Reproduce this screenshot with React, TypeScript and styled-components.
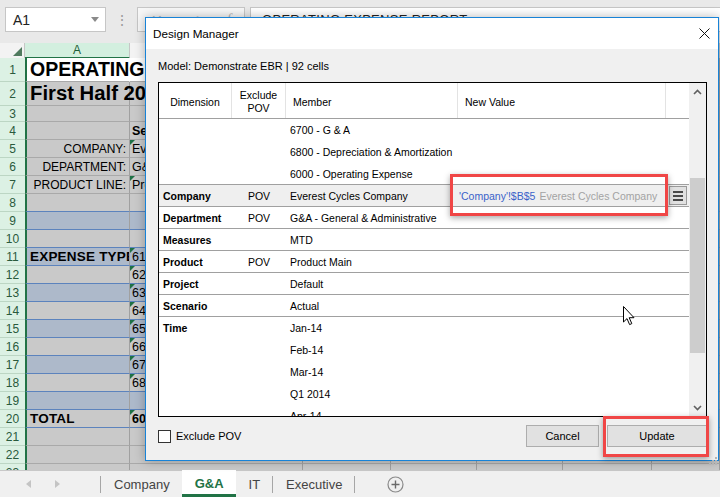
import React from 'react';
import styled, { createGlobalStyle } from 'styled-components';

const FONT = '"Liberation Sans", Arial, sans-serif';
const SHEET_COLS = '25px 105px 173px 88px 86px 86px 89px 1fr';
const GRID_COLS = '73px 54px 172px 208px 1fr';

const GlobalStyle = createGlobalStyle`
  html, body { margin: 0; padding: 0; }
  body { font-family: ${FONT}; background: #fff; }
  *, *::before, *::after { box-sizing: border-box; }
`;

/* ---------- Excel frame ---------- */

const Screen = styled.div`
  position: relative;
  width: 720px;
  height: 497px;
  overflow: hidden;
  display: flex;
  flex-direction: column;
  background: #e9e9e9;
  font-family: ${FONT};
`;

const FormulaBar = styled.div`
  height: 43px;
  flex: none;
  display: flex;
  align-items: flex-start;
  padding: 7px 0 0 5px;
  background: #e9e9e9;
`;

const NameBox = styled.div`
  width: 101px;
  height: 25px;
  background: #fff;
  border: 1px solid #c6c6c6;
  display: flex;
  align-items: center;
  justify-content: space-between;
  padding: 0 6px 0 7px;
  font-size: 14px;
  color: #222;
`;

const Grip = styled.div`
  width: 31px;
  height: 25px;
  display: flex;
  align-items: center;
  justify-content: center;
  color: #9a9a9a;
  font-size: 14px;
`;

const FxGroup = styled.div`
  width: 108px;
  height: 25px;
  border: 1px solid #c6c6c6;
  background: #f7f7f7;
  display: flex;
  align-items: center;
  justify-content: space-around;
  color: #b4b4b4;
  font-size: 14px;
`;

const FxText = styled.span`
  font-style: italic;
  font-family: "Liberation Serif", serif;
  font-size: 15px;
`;

const FormulaInput = styled.div`
  flex: 1;
  margin-left: 5px;
  height: 25px;
  background: #fff;
  border: 1px solid #c6c6c6;
  border-right: none;
  display: flex;
  align-items: center;
  padding-left: 11px;
  font-size: 13px;
  color: #222;
  letter-spacing: 0.3px;
`;

const ColHeaderRow = styled.div`
  display: grid;
  grid-template-columns: ${SHEET_COLS};
  height: 15px;
  flex: none;
  background: #f3f3f3;
`;

const Corner = styled.div`
  display: flex;
  align-items: flex-end;
  justify-content: flex-end;
  padding: 0 2px 2px 0;
  border-right: 1px solid #c6c6c6;
  border-bottom: 1px solid #c6c6c6;
`;

const ColHead = styled.div<{ $sel?: boolean }>`
  display: flex;
  align-items: center;
  justify-content: center;
  font-size: 12px;
  color: ${p => (p.$sel ? '#1d5e38' : '#444')};
  background: ${p => (p.$sel ? '#d3efdf' : '#f3f3f3')};
  border-right: 1px solid #c6c6c6;
  border-bottom: ${p => (p.$sel ? '2px solid #217346' : '1px solid #c6c6c6')};
`;

const SheetBody = styled.div`
  flex: 1;
  overflow: hidden;
  display: flex;
  flex-direction: column;
`;

const SheetRow = styled.div<{ $h: number; $fill: string }>`
  display: grid;
  grid-template-columns: ${SHEET_COLS};
  height: ${p => p.$h}px;
  flex: none;
  background: ${p => p.$fill};
`;

const RowHead = styled.div`
  display: flex;
  align-items: center;
  justify-content: center;
  font-size: 12px;
  color: #2a5a3c;
  background: #dcf1e4;
  border-bottom: 1px solid #bcd6c4;
`;

const Cell = styled.div<{
  $line: string;
  $align?: 'left' | 'right';
  $noRight?: boolean;
  $sel?: boolean;
  $clip?: boolean;
  $tri?: boolean;
}>`
  position: relative;
  display: flex;
  align-items: center;
  justify-content: ${p => (p.$align === 'right' ? 'flex-end' : 'flex-start')};
  padding: ${p => (p.$sel ? '0 3px 0 3px' : '0 3px 0 2px')};
  white-space: nowrap;
  overflow: ${p => (p.$clip ? 'hidden' : 'visible')};
  border-right: 1px solid ${p => (p.$noRight ? 'transparent' : '#a0a0a0')};
  border-bottom: 1px solid ${p => p.$line};
  border-left: ${p => (p.$sel ? '2px solid #217346' : '0')};
  color: #000;

  &::before {
    content: '';
    display: ${p => (p.$tri ? 'block' : 'none')};
    position: absolute;
    left: 0;
    top: 0;
    border-top: 5px solid #1e7145;
    border-right: 5px solid transparent;
  }
`;

type Kind = 'title' | 'subtitle' | 'head' | 'label' | 'value' | 'valueBold';

const SIZES: Record<Kind, string> = {
  title: '19.5px',
  subtitle: '20.3px',
  head: '13.5px',
  label: '12px',
  value: '12.5px',
  valueBold: '12.5px',
};

const CellText = styled.span<{ $kind: Kind }>`
  font-size: ${p => SIZES[p.$kind]};
  font-weight: ${p => (p.$kind === 'label' || p.$kind === 'value' ? 'normal' : 'bold')};
  letter-spacing: ${p => (p.$kind === 'head' ? '0.2px' : '0')};
`;

const TabBar = styled.div`
  height: 27px;
  flex: none;
  border-top: 1px solid #c8c8c8;
  background: #f0f0f0;
  display: flex;
  align-items: stretch;
  font-size: 13px;
  color: #444;
`;

const NavArrows = styled.div`
  width: 100px;
  display: flex;
  align-items: center;
  padding-left: 26px;
  gap: 24px;
`;

const TabSep = styled.div`
  width: 1px;
  background: #a6a6a6;
  margin: 5px 0 4px;
`;

const Tab = styled.div<{ $active?: boolean }>`
  display: flex;
  align-items: center;
  padding: 3px 12px 0 13px;
  background: ${p => (p.$active ? '#fff' : 'transparent')};
  color: ${p => (p.$active ? '#217346' : '#444')};
  font-weight: ${p => (p.$active ? 'bold' : 'normal')};
  border-bottom: 3px solid ${p => (p.$active ? '#217346' : 'transparent')};
  margin-top: ${p => (p.$active ? '-1px' : '0')};
`;

const AddSheet = styled.div`
  display: flex;
  align-items: center;
  padding-left: 32px;
`;

/* ---------- Dialog ---------- */

const Dialog = styled.div`
  position: absolute;
  left: 145px;
  top: 17px;
  width: 574px;
  height: 444px;
  border: 1px solid #1883d7;
  background: #f0f0f0;
  display: flex;
  flex-direction: column;
  box-shadow: 0 0 10px rgba(0, 0, 0, 0.28);
  font-family: ${FONT};
  color: #000;
`;

const TitleBar = styled.div`
  height: 31px;
  flex: none;
  background: #fff;
  display: flex;
  align-items: center;
  padding: 0 8px 0 7px;
  font-size: 11.7px;
`;

const TitleText = styled.span`
  flex: 1;
`;

const DialogBody = styled.div`
  flex: 1;
  display: flex;
  flex-direction: column;
  padding: 11px 11px 0 12px;
`;

const ModelLabel = styled.div`
  font-size: 11px;
  line-height: 13px;
`;

const GridFrame = styled.div`
  margin-top: 9px;
  height: 335px;
  flex: none;
  border: 1px solid #000;
  display: flex;
  background: #fff;
`;

const GridMain = styled.div`
  flex: 1;
  min-width: 0;
  display: flex;
  flex-direction: column;
  overflow: hidden;
  font-size: 10.5px;
`;

const HeaderRow = styled.div`
  display: grid;
  grid-template-columns: ${GRID_COLS};
  height: 36px;
  flex: none;
  border-bottom: 1px solid #a0a0a0;
`;

const HeaderCell = styled.div<{ $center?: boolean; $last?: boolean }>`
  display: flex;
  align-items: center;
  justify-content: ${p => (p.$center ? 'center' : 'flex-start')};
  text-align: center;
  padding: ${p => (p.$center ? '3px 0 0' : '3px 7px 0')};
  line-height: 13px;
  border-right: ${p => (p.$last ? 'none' : '1px solid #e3e3e3')};
`;

const Group = styled.div<{ $sel?: boolean }>`
  display: grid;
  grid-template-columns: ${GRID_COLS};
  flex: none;
  background: ${p => (p.$sel ? '#efefef' : '#fff')};
  box-shadow: inset 0 -1px 0 #a0a0a0;
`;

const DimCell = styled.div`
  font-weight: bold;
  padding-left: 4px;
  line-height: 22px;
  height: 22px;
  white-space: nowrap;
`;

const PovCell = styled.div`
  text-align: center;
  line-height: 22px;
  height: 22px;
`;

const MemberCell = styled.div`
  padding-left: 4px;
  display: flex;
  flex-direction: column;
`;

const MemberLine = styled.div`
  height: 22px;
  line-height: 22px;
  white-space: nowrap;
`;

const NewValueCell = styled.div`
  position: relative;
  padding-left: 1px;
  line-height: 22px;
  height: 22px;
  white-space: nowrap;
`;

const RefText = styled.span`
  color: #3a62c9;
`;

const ValueText = styled.span`
  color: #a3a3a3;
  margin-left: 4px;
`;

const MenuCell = styled.div`
  display: flex;
  align-items: center;
  justify-content: center;
  height: 22px;
  padding-bottom: 1px;
`;

const MenuButton = styled.div`
  width: 18px;
  height: 19px;
  background: #e1e1e1;
  border: 1px solid #9a9a9a;
  display: flex;
  flex-direction: column;
  align-items: center;
  justify-content: center;
  gap: 2px;
`;

const MenuBar = styled.span`
  width: 10px;
  height: 2px;
  background: #4a4a4a;
`;

const Callout = styled.div<{ $t: number; $r: number; $b: number; $l: number }>`
  position: absolute;
  top: ${p => p.$t}px;
  right: ${p => p.$r}px;
  bottom: ${p => p.$b}px;
  left: ${p => p.$l}px;
  border: 3px solid #f04646;
  box-shadow: 0 2px 6px rgba(0, 0, 0, 0.35);
  pointer-events: none;
  z-index: 2;
`;

const ScrollTrack = styled.div`
  width: 17px;
  flex: none;
  background: #f0f0f0;
  display: flex;
  flex-direction: column;
  align-items: center;
`;

const ScrollArrow = styled.div<{ $bottom?: boolean }>`
  height: 17px;
  width: 17px;
  flex: none;
  display: flex;
  align-items: center;
  justify-content: center;
  margin-top: ${p => (p.$bottom ? 'auto' : '0')};
`;

const ScrollThumb = styled.div`
  width: 15px;
  height: 175px;
  margin-top: 78px;
  background: #cdcdcd;
`;

const Footer = styled.div`
  flex: 1;
  display: flex;
  align-items: flex-start;
  padding-top: 8px;
`;

const CheckRow = styled.label`
  display: flex;
  align-items: center;
  gap: 5px;
  margin-top: 5px;
  font-size: 11px;
  line-height: 13px;
`;

const CheckBox = styled.span`
  width: 13px;
  height: 13px;
  border: 1px solid #333;
  background: #fff;
`;

const Buttons = styled.div`
  margin-left: auto;
  display: flex;
  gap: 8px;
`;

const Button = styled.div<{ $w: number }>`
  position: relative;
  width: ${p => p.$w}px;
  height: 22px;
  background: #e1e1e1;
  border: 1px solid #adadad;
  display: flex;
  align-items: center;
  justify-content: center;
  font-size: 11px;
`;

const ResizeGrip = styled.div`
  position: absolute;
  right: 1px;
  bottom: 1px;
  width: 8px;
  height: 8px;
`;

const Cursor = styled.div`
  position: absolute;
  left: 622px;
  top: 305px;
  width: 14px;
  height: 22px;
`;

/* ---------- data ---------- */

interface SheetRowData {
  n: number;
  h: number;
  fill: 'grey' | 'blue' | 'white';
  line: 'grey' | 'blue';
  a?: string;
  aKind?: Kind;
  b?: string;
  bKind?: Kind;
  tri?: boolean;
}

const FILL = { grey: '#c9c9c9', blue: '#adb9ca', white: '#ffffff' };
const LINE = { grey: '#a9a9a9', blue: '#5c83bd' };

const sheetRows: SheetRowData[] = [
  { n: 1, h: 24, fill: 'white', line: 'grey', a: 'OPERATING EXPENSE REPORT', aKind: 'title' },
  { n: 2, h: 24, fill: 'grey', line: 'grey', a: 'First Half 2014', aKind: 'subtitle' },
  { n: 3, h: 16, fill: 'grey', line: 'grey' },
  { n: 4, h: 18, fill: 'grey', line: 'grey', b: 'Selections', bKind: 'valueBold' },
  { n: 5, h: 18, fill: 'grey', line: 'grey', a: 'COMPANY:', aKind: 'label', b: 'Everest Cycles Company', tri: true },
  { n: 6, h: 18, fill: 'grey', line: 'grey', a: 'DEPARTMENT:', aKind: 'label', b: 'G&A - General & Administrative' },
  { n: 7, h: 18, fill: 'grey', line: 'grey', a: 'PRODUCT LINE:', aKind: 'label', b: 'Product Main', tri: true },
  { n: 8, h: 18, fill: 'grey', line: 'blue' },
  { n: 9, h: 18, fill: 'blue', line: 'blue' },
  { n: 10, h: 18, fill: 'grey', line: 'blue' },
  { n: 11, h: 18, fill: 'blue', line: 'blue', a: 'EXPENSE TYPE', aKind: 'head', b: '6100 - Salaries & Wages', tri: true },
  { n: 12, h: 18, fill: 'grey', line: 'blue', b: '6200 - Benefits', tri: true },
  { n: 13, h: 18, fill: 'blue', line: 'blue', b: '6300 - Travel & Entertainment', tri: true },
  { n: 14, h: 18, fill: 'grey', line: 'blue', b: '6400 - Office Expenses', tri: true },
  { n: 15, h: 18, fill: 'blue', line: 'blue', b: '6500 - Professional Fees', tri: true },
  { n: 16, h: 18, fill: 'grey', line: 'blue', b: '6600 - Facilities', tri: true },
  { n: 17, h: 18, fill: 'blue', line: 'blue', b: '6700 - G & A', tri: true },
  { n: 18, h: 18, fill: 'grey', line: 'blue', b: '6800 - Depreciation & Amortization', tri: true },
  { n: 19, h: 18, fill: 'blue', line: 'blue' },
  { n: 20, h: 18, fill: 'grey', line: 'blue', a: 'TOTAL', aKind: 'head', b: '6000 - Operating Expense', bKind: 'valueBold', tri: true },
  { n: 21, h: 18, fill: 'grey', line: 'grey' },
  { n: 22, h: 18, fill: 'grey', line: 'grey' },
  { n: 23, h: 18, fill: 'grey', line: 'grey' },
];

interface GroupData {
  dim?: string;
  pov?: string;
  members: string[];
  selected?: boolean;
}

const groups: GroupData[] = [
  { members: ['6700 - G & A', '6800 - Depreciation & Amortization', '6000 - Operating Expense'] },
  { dim: 'Company', pov: 'POV', members: ['Everest Cycles Company'], selected: true },
  { dim: 'Department', pov: 'POV', members: ['G&A - General & Administrative'] },
  { dim: 'Measures', members: ['MTD'] },
  { dim: 'Product', pov: 'POV', members: ['Product Main'] },
  { dim: 'Project', members: ['Default'] },
  { dim: 'Scenario', members: ['Actual'] },
  { dim: 'Time', members: ['Jan-14', 'Feb-14', 'Mar-14', 'Q1 2014', 'Apr-14', 'May-14'] },
];

/* ---------- small drawings ---------- */

const Chevron = ({ down }: { down?: boolean }) => (
  <svg width="9" height="6" viewBox="0 0 9 6">
    <path
      d={down ? 'M1 1 L4.5 4.5 L8 1' : 'M1 5 L4.5 1.5 L8 5'}
      fill="none"
      stroke="#606060"
      strokeWidth="1.6"
    />
  </svg>
);

const CloseIcon = () => (
  <svg width="11" height="11" viewBox="0 0 11 11">
    <path d="M0.5 0.5 L10.5 10.5 M10.5 0.5 L0.5 10.5" stroke="#111" strokeWidth="1" />
  </svg>
);

const NavTriangle = ({ right }: { right?: boolean }) => (
  <svg width="5" height="8" viewBox="0 0 5 8">
    <path d={right ? 'M0 0 L5 4 L0 8 Z' : 'M5 0 L0 4 L5 8 Z'} fill="#c4c4c4" />
  </svg>
);

const PlusCircle = () => (
  <svg width="17" height="17" viewBox="0 0 17 17">
    <circle cx="8.5" cy="8.5" r="7.5" fill="none" stroke="#8a8a8a" strokeWidth="1.2" />
    <path d="M8.5 4.5 V12.5 M4.5 8.5 H12.5" stroke="#6a6a6a" strokeWidth="1.4" />
  </svg>
);

const CornerTriangle = () => (
  <svg width="9" height="9" viewBox="0 0 9 9">
    <path d="M9 0 L9 9 L0 9 Z" fill="#4f7a5e" />
  </svg>
);

const DropTriangle = () => (
  <svg width="8" height="5" viewBox="0 0 8 5">
    <path d="M0 0 L8 0 L4 5 Z" fill="#8a8a8a" />
  </svg>
);

const GripDots = () => (
  <svg width="8" height="8" viewBox="0 0 8 8">
    {[
      [6, 0],
      [3, 3],
      [6, 3],
      [0, 6],
      [3, 6],
      [6, 6],
    ].map(([x, y]) => (
      <rect key={`${x}-${y}`} x={x} y={y} width="2" height="2" fill="#b5b5b5" />
    ))}
  </svg>
);

const PointerCursor = () => (
  <svg width="14" height="22" viewBox="0 0 14 22">
    <path
      d="M1.5 1.5 L1.5 17 L5 13.6 L7.6 19.6 L9.8 18.6 L7.2 12.7 L12 12.7 Z"
      fill="#fff"
      stroke="#000"
      strokeWidth="1"
      strokeLinejoin="round"
    />
  </svg>
);

/* ---------- app ---------- */

export default function App() {
  const emptyCols = [0, 1, 2, 3, 4];
  return (
    <>
      <GlobalStyle />
      <Screen>
        <FormulaBar>
          <NameBox>
            <span>A1</span>
            <DropTriangle />
          </NameBox>
          <Grip>⋮</Grip>
          <FxGroup>
            <span>✕</span>
            <span>✓</span>
            <FxText>f</FxText>
          </FxGroup>
          <FormulaInput>OPERATING EXPENSE REPORT</FormulaInput>
        </FormulaBar>

        <ColHeaderRow>
          <Corner>
            <CornerTriangle />
          </Corner>
          <ColHead $sel>A</ColHead>
          <ColHead>B</ColHead>
          <ColHead>C</ColHead>
          <ColHead>D</ColHead>
          <ColHead>E</ColHead>
          <ColHead>F</ColHead>
          <ColHead>G</ColHead>
        </ColHeaderRow>

        <SheetBody>
          {sheetRows.map(r => {
            const line = LINE[r.line];
            const overflowing = r.fill === 'white';
            return (
              <SheetRow key={r.n} $h={r.h} $fill={FILL[r.fill]}>
                <RowHead>{r.n}</RowHead>
                <Cell
                  $sel
                  $line={line}
                  $noRight={overflowing}
                  $align={r.aKind === 'label' ? 'right' : 'left'}
                  $clip={!!r.b}
                >
                  {r.a && <CellText $kind={r.aKind ?? 'value'}>{r.a}</CellText>}
                </Cell>
                <Cell $line={line} $tri={r.tri} $clip>
                  {r.b && <CellText $kind={r.bKind ?? 'value'}>{r.b}</CellText>}
                </Cell>
                {emptyCols.map(i => (
                  <Cell key={i} $line={line} />
                ))}
              </SheetRow>
            );
          })}
        </SheetBody>

        <TabBar>
          <NavArrows>
            <NavTriangle />
            <NavTriangle right />
          </NavArrows>
          <TabSep />
          <Tab>Company</Tab>
          <Tab $active>G&amp;A</Tab>
          <Tab>IT</Tab>
          <TabSep />
          <Tab>Executive</Tab>
          <TabSep />
          <AddSheet>
            <PlusCircle />
          </AddSheet>
        </TabBar>

        <Dialog>
          <TitleBar>
            <TitleText>Design Manager</TitleText>
            <CloseIcon />
          </TitleBar>
          <DialogBody>
            <ModelLabel>Model: Demonstrate EBR | 92 cells</ModelLabel>
            <GridFrame>
              <GridMain>
                <HeaderRow>
                  <HeaderCell $center>Dimension</HeaderCell>
                  <HeaderCell $center>
                    Exclude
                    <br />
                    POV
                  </HeaderCell>
                  <HeaderCell>Member</HeaderCell>
                  <HeaderCell>New Value</HeaderCell>
                  <HeaderCell $last />
                </HeaderRow>
                {groups.map((g, i) => (
                  <Group key={i} $sel={g.selected}>
                    <DimCell>{g.dim}</DimCell>
                    <PovCell>{g.pov}</PovCell>
                    <MemberCell>
                      {g.members.map(m => (
                        <MemberLine key={m}>{m}</MemberLine>
                      ))}
                    </MemberCell>
                    {g.selected ? (
                      <NewValueCell>
                        <RefText>'Company'!$B$5</RefText>
                        <ValueText>Everest Cycles Company</ValueText>
                        <Callout $t={-11} $r={-2} $b={-9} $l={-8} />
                      </NewValueCell>
                    ) : (
                      <div />
                    )}
                    {g.selected ? (
                      <MenuCell>
                        <MenuButton>
                          <MenuBar />
                          <MenuBar />
                          <MenuBar />
                        </MenuButton>
                      </MenuCell>
                    ) : (
                      <div />
                    )}
                  </Group>
                ))}
              </GridMain>
              <ScrollTrack>
                <ScrollArrow>
                  <Chevron />
                </ScrollArrow>
                <ScrollThumb />
                <ScrollArrow $bottom>
                  <Chevron down />
                </ScrollArrow>
              </ScrollTrack>
            </GridFrame>
            <Footer>
              <CheckRow>
                <CheckBox />
                Exclude POV
              </CheckRow>
              <Buttons>
                <Button $w={73}>Cancel</Button>
                <Button $w={100}>
                  Update
                  <Callout $t={-10} $r={-3} $b={-11} $l={-5} />
                </Button>
              </Buttons>
            </Footer>
          </DialogBody>
          <ResizeGrip>
            <GripDots />
          </ResizeGrip>
        </Dialog>

        <Cursor>
          <PointerCursor />
        </Cursor>
      </Screen>
    </>
  );
}
